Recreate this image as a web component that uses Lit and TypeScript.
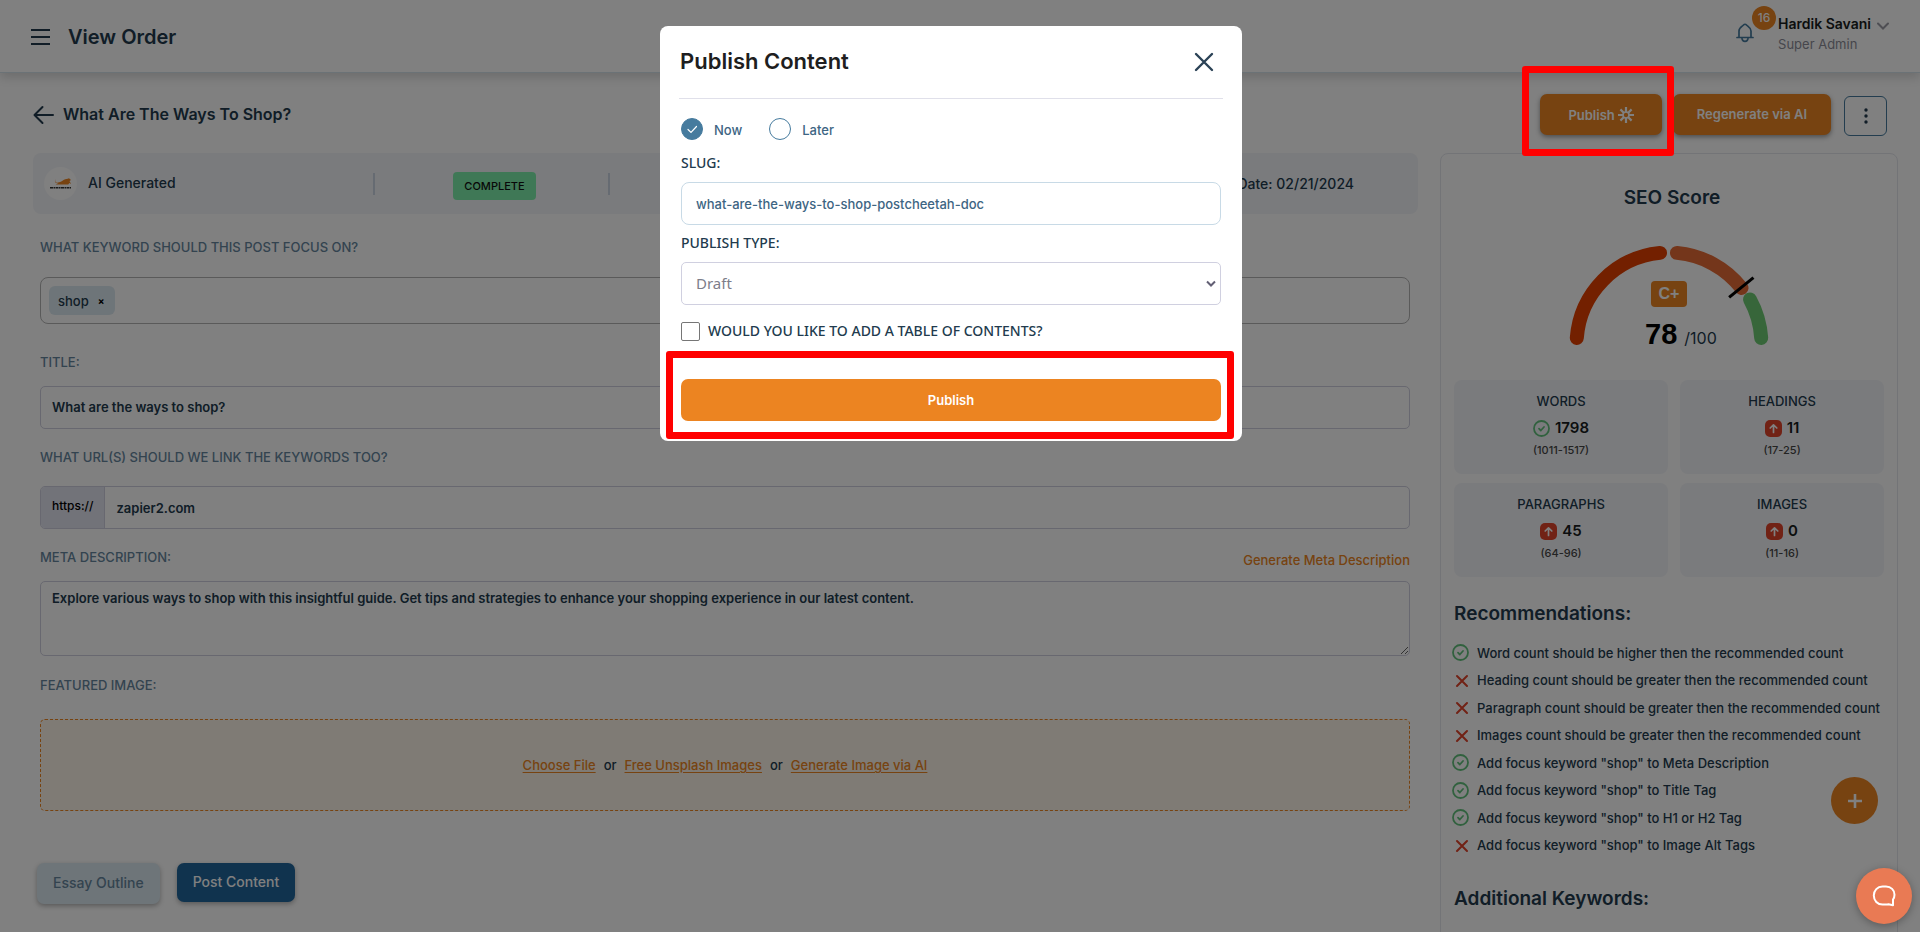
import { LitElement, html, css, nothing } from "lit";
import { customElement, state } from "lit/decorators.js";

const burgerIcon = html`<svg width="20" height="18" viewBox="0 0 20 18" fill="none" stroke="#223b4e" stroke-width="2" aria-hidden="true"><path d="M0 2h19M0 9h19M0 16h19" /></svg>`;
const backIcon = html`<svg width="21" height="20" viewBox="0 0 21 20" fill="none" stroke="#223b4e" stroke-width="2" stroke-linecap="round" stroke-linejoin="round" aria-hidden="true"><path d="M20 10H2M9.500 2L1.500 10l8 8" /></svg>`;
const bellIcon = html`<svg width="18" height="20" viewBox="0 0 18 20" fill="none" stroke="#467b9e" stroke-width="1.700" stroke-linejoin="round" stroke-linecap="round" aria-hidden="true"><path d="M1 14.500h16M3 14.300V8c0-3.500 3.200-4.600 4.500-6 .9-1 2.100-1 3 0C11.800 3.400 15 4.500 15 8v6.300" /><path d="M6 15.500c.4 3.900 5.600 3.900 6 0" /></svg>`;
const chevronIcon = html`<svg width="12" height="8" viewBox="0 0 12 8" fill="none" stroke="#9c9ca6" stroke-width="2" stroke-linecap="round" aria-hidden="true"><path d="M1 1.500l5 5 5-5" /></svg>`;
const burstIcon = html`<svg width="16" height="16" viewBox="0 0 16 16" fill="none" stroke="#fff" stroke-width="2.200" aria-hidden="true"><circle cx="8" cy="8" r="3" stroke-width="1.600" /><path d="M8 0v5.500M8 10.500V16M0 8h5.500M10.500 8H16M2.400 2.400l3.800 3.800M9.800 9.800l3.800 3.800M13.600 2.400L9.800 6.200M6.200 9.800l-3.800 3.800" /></svg>`;
const dotsIcon = html`<svg width="4" height="16" viewBox="0 0 4 16" fill="#223b4e" aria-hidden="true"><circle cx="2" cy="2" r="1.700" /><circle cx="2" cy="8" r="1.700" /><circle cx="2" cy="14" r="1.700" /></svg>`;
const okIcon = html`<svg width="17" height="17" viewBox="0 0 17 17" fill="none" stroke="#62c27d" stroke-width="1.800" stroke-linecap="round" stroke-linejoin="round" aria-hidden="true"><circle cx="8.500" cy="8.500" r="7.500" /><path d="M6 8.700l1.800 1.800 3.200-3.500" /></svg>`;
const crossIcon = html`<svg width="17" height="17" viewBox="0 0 17 17" fill="none" stroke="#e2442b" stroke-width="2" stroke-linecap="round" aria-hidden="true"><path d="M5 4l10 10M15 4L5 14" /></svg>`;
const upIcon = html`<svg width="17" height="17" viewBox="0 0 17 17" fill="none" stroke="#fff" stroke-width="1.700" stroke-linecap="round" stroke-linejoin="round" aria-hidden="true"><rect width="17" height="17" rx="5" fill="#e2442b" stroke="none" /><path d="M8.500 12.500v-7.500M5.200 8l3.300-3.200L11.800 8" /></svg>`;
const closeIcon = html`<svg width="20" height="20" viewBox="0 0 20 20" fill="none" stroke="#2b4256" stroke-width="2.400" stroke-linecap="round" aria-hidden="true"><path d="M2 2l16 16M18 2L2 18" /></svg>`;
const chatIcon = html`<svg width="24" height="22" viewBox="0 0 24 22" fill="none" stroke="#fff" stroke-width="2" stroke-linejoin="round" aria-hidden="true"><path d="M10.500 1.500h3.500c5 0 8.500 3.600 8.500 8.200 0 1.900-.6 3.500-1.500 4.800v5.700l-4.500-1c-.8.300-1.600.4-2.500.4h-3.500c-5 0-8.700-4-8.700-9s3.700-9.100 8.700-9.100z" /></svg>`;
const plusIcon = html`<svg width="14" height="14" viewBox="0 0 14 14" fill="none" stroke="#fff" stroke-width="2.600" aria-hidden="true"><path d="M7 0v14M0 7h14" /></svg>`;
const cheetahLogo = html`<svg width="22" height="12" viewBox="0 0 22 12" aria-hidden="true"><path d="M5.500 1.200c-.8 1.800-.2 3.200 1.500 3.600 3-.4 5-1.400 7-3 1.600-.8 3.300-.9 5-1.500l2 1.800-1.500.8 1.600 3-1.800-1-1 1.700H5.500l3-1.300c-2.800.3-4.500-1.600-3-4.100z" fill="#ed8522" /><path d="M0 9.700h21" stroke="#333" stroke-width="1.400" stroke-dasharray="3 .5 1.500 .5" /></svg>`;

const FONT = css`Inter, "Liberation Sans", sans-serif`;

@customElement("app-header")
class AppHeader extends LitElement {
  static styles = css`
    :host { display: block; font-family: ${FONT}; }
    .bar { display: flex; align-items: center; box-sizing: border-box; height: 73px; padding: 2px 31px 0; background: #fff; border-bottom: 1px solid #d6e3ec; box-shadow: 0 4px 10px rgba(0, 0, 0, 0.16); }
    button { border: 0; background: none; padding: 0; font: inherit; cursor: pointer; display: flex; }
    h1 { margin: 0 auto 0 17px; font-size: 20px; line-height: 24px; font-weight: 600; color: #223b4e; }
    .bell { position: relative; margin: 0 24px 8px 0; }
    .count { position: absolute; left: 16px; top: -17px; width: 24px; height: 24px; border-radius: 50%; background: #ed8522; color: #fff; font-size: 12px; line-height: 24px; font-weight: 500; text-align: center; }
    .user { align-items: flex-start; gap: 6px; text-align: left; margin-bottom: 6px; }
    .name { display: block; font-size: 14px; line-height: 20px; font-weight: 600; color: #181c20; }
    .role { display: block; font-size: 13px; line-height: 20px; color: #8c8c98; }
    .user svg { margin-top: 8px; }
  `;
  render() {
    return html`<header class="bar">
      <button aria-label="Menu">${burgerIcon}</button>
      <h1>View Order</h1>
      <button class="bell" aria-label="Notifications">${bellIcon}<span class="count">16</span></button>
      <button class="user"><span><span class="name">Hardik Savani</span><span class="role">Super Admin</span></span>${chevronIcon}</button>
    </header>`;
  }
}

@customElement("seo-panel")
class SeoPanel extends LitElement {
  static styles = css`
    :host { display: block; box-sizing: border-box; border: 1px solid #e6e8ee; border-radius: 8px; padding: 32px 13px 60px; color: #223b4e; font-family: ${FONT}; }
    h2 { margin: 0; font-size: 19px; line-height: 24px; font-weight: 600; }
    .score { padding-left: 6px; text-align: center; }
    .gauge { position: relative; width: 212px; height: 115px; margin: 28px auto 27px; }
    .grade { position: absolute; left: 88px; top: 43px; width: 36px; height: 26px; border-radius: 4px; background: #ed8522; color: #fff; font: 700 16px/26px "Liberation Sans", sans-serif; text-align: center; }
    .total { position: absolute; left: 82px; top: 78px; display: flex; gap: 7px; align-items: baseline; line-height: 36px; font-size: 16px; white-space: nowrap; }
    .total b { font: 700 29px/36px "Liberation Sans", sans-serif; color: #000; }
    .stats { display: grid; grid-template-columns: 1.05fr 1fr; gap: 9px 12px; }
    .stat { box-sizing: border-box; height: 94px; padding-top: 11px; background: #f4f6fa; border-radius: 8px; text-align: center; }
    .stat-name { font-size: 13px; line-height: 20px; font-weight: 500; }
    .stat-value { display: flex; justify-content: center; align-items: center; gap: 5px; margin-top: 5px; font-size: 15px; line-height: 24px; font-weight: 600; color: #181c20; }
    .stat-range { margin-top: 2px; font-size: 11px; line-height: 16px; font-weight: 500; color: #474747; }
    .recs-title { margin-top: 25px; }
    .recs { list-style: none; margin: 13px 0 28px; padding: 0; height: 220px; display: grid; grid-auto-rows: 1fr; }
    .recs li { display: flex; align-items: center; gap: 8px; font-size: 13px; font-weight: 500; white-space: nowrap; }
    .recs svg { margin-left: -2px; }
  `;
  stats = [
    { name: "WORDS", value: "1798", range: "(1011-1517)", ok: true },
    { name: "HEADINGS", value: "11", range: "(17-25)", ok: false },
    { name: "PARAGRAPHS", value: "45", range: "(64-96)", ok: false },
    { name: "IMAGES", value: "0", range: "(11-16)", ok: false },
  ];
  recommendations: [boolean, string][] = [
    [true, "Word count should be higher then the recommended count"],
    [false, "Heading count should be greater then the recommended count"],
    [false, "Paragraph count should be greater then the recommended count"],
    [false, "Images count should be greater then the recommended count"],
    [true, 'Add focus keyword "shop" to Meta Description'],
    [true, 'Add focus keyword "shop" to Title Tag'],
    [true, 'Add focus keyword "shop" to H1 or H2 Tag'],
    [false, 'Add focus keyword "shop" to Image Alt Tags'],
  ];
  render() {
    return html`
      <h2 class="score">SEO Score</h2>
      <div class="gauge">
        <svg width="212" height="115" viewBox="0 0 212 115" fill="none" stroke-width="14" stroke-linecap="round" aria-hidden="true">
          <path d="M13.800 100A92.500 92.500 0 0 1 97 14.900" stroke="#e54000" />
          <path d="M114 14.900A92.500 92.500 0 0 1 178.500 50" stroke="#e86c36" />
          <path d="M187 61.500A92.500 92.500 0 0 1 198.200 100" stroke="#6ecc74" />
          <path d="M167.300 58.500L189.300 40.500" stroke="#000" stroke-width="3" stroke-linecap="square" />
        </svg>
        <span class="grade">C+</span>
        <span class="total"><b>78</b><span>/100</span></span>
      </div>
      <div class="stats">
        ${this.stats.map((s) => html`<div class="stat">
          <div class="stat-name">${s.name}</div>
          <div class="stat-value">${s.ok ? okIcon : upIcon}<span>${s.value}</span></div>
          <div class="stat-range">${s.range}</div>
        </div>`)}
      </div>
      <h2 class="recs-title">Recommendations:</h2>
      <ul class="recs">
        ${this.recommendations.map(([ok, text]) => html`<li>${ok ? okIcon : crossIcon}<span>${text}</span></li>`)}
      </ul>
      <h2>Additional Keywords:</h2>
    `;
  }
}

@customElement("publish-dialog")
class PublishDialog extends LitElement {
  @state() when = "now";
  static styles = css`
    :host { display: block; width: 582px; max-width: 100%; font-family: ${FONT}; }
    .dialog { box-sizing: border-box; background: #fff; border-radius: 8px; padding: 0 19px 20px; }
    .head { display: flex; align-items: center; justify-content: space-between; height: 72px; padding: 0 9px 0 1px; border-bottom: 1px solid #e0e0ea; }
    h2 { margin: 0 0 2px; font-size: 22px; line-height: 26px; font-weight: 600; color: #1e1e20; }
    .close { border: 0; background: none; padding: 0; display: flex; cursor: pointer; }
    .body { padding: 19px 2px 0; }
    .when { display: flex; gap: 27px; }
    .when label { display: flex; align-items: center; gap: 11px; font-size: 13px; line-height: 22px; font-weight: 500; color: #3d6583; }
    .when span { padding-top: 2px; line-height: 20px; }
    .when input { appearance: none; width: 22px; height: 22px; margin: 0; border: 1px solid #467b9e; border-radius: 50%; background: #fff; }
    .when input:checked { background: #467b9e url("data:image/svg+xml,%3Csvg xmlns='http://www.w3.org/2000/svg' viewBox='0 0 20 20' fill='none' stroke='white' stroke-width='1.200' stroke-linecap='round'%3E%3Cpath d='M6 10.500l3 3 5.500-6'/%3E%3C/svg%3E"); }
    .caption { display: block; font-family: "Noto Sans", sans-serif; font-size: 14px; line-height: 20px; font-weight: 500; color: #223b4e; }
    .slug-caption { margin: 13px 0 9px; }
    .type-caption { margin: 8px 0 9px; }
    .control { display: block; box-sizing: border-box; width: 100%; height: 43px; margin: 0; padding: 0 14px; background: #fff; outline: 0; }
    .slug { border: 1px solid #c8dae6; border-radius: 8px; font: 500 13px ${FONT}; color: #3d6583; }
    .type { appearance: none; padding-bottom: 2px; border: 1px solid #d0d0e0; border-radius: 5px; font: 400 15px "Noto Sans", sans-serif; color: #7d7d8a; background: #fff url("data:image/svg+xml,%3Csvg xmlns='http://www.w3.org/2000/svg' width='10' height='8' fill='none' stroke='%23625f74' stroke-width='2'%3E%3Cpath d='M1 1.500l4 4 4-4'/%3E%3C/svg%3E") no-repeat right 4px center; }
    .toc { display: flex; align-items: center; gap: 8px; margin: 16px 0 38px; }
    .toc input { appearance: none; width: 19px; height: 19px; margin: 0; border: 1px solid #767676; border-radius: 2px; }
    .marked { position: relative; }
    .marked::after { content: ""; position: absolute; inset: -28px -13px -18px -15px; border: 7px solid #f00; border-radius: 3px; pointer-events: none; }
    .publish { display: block; width: 100%; height: 42px; border: 0; border-radius: 7px; background: #ec8421; color: #fff; font: 600 13px ${FONT}; cursor: pointer; }
  `;
  render() {
    return html`<section class="dialog" role="dialog" aria-modal="true" aria-labelledby="heading">
      <div class="head"><h2 id="heading">Publish Content</h2><button class="close" aria-label="Close">${closeIcon}</button></div>
      <form class="body" @submit=${(e: Event) => e.preventDefault()}>
        <div class="when">
          <label><input type="radio" name="when" .checked=${this.when === "now"} @change=${() => (this.when = "now")} /><span>Now</span></label>
          <label><input type="radio" name="when" .checked=${this.when === "later"} @change=${() => (this.when = "later")} /><span>Later</span></label>
        </div>
        <label class="caption slug-caption" for="slug">SLUG:</label>
        <input class="control slug" id="slug" type="text" value="what-are-the-ways-to-shop-postcheetah-doc" />
        <label class="caption type-caption" for="type">PUBLISH TYPE:</label>
        <select class="control type" id="type"><option>Draft</option><option>Publish</option></select>
        <div class="toc"><input type="checkbox" id="toc" /><label class="caption" for="toc">WOULD YOU LIKE TO ADD A TABLE OF CONTENTS?</label></div>
        <div class="marked"><button class="publish">Publish</button></div>
      </form>
    </section>`;
  }
}

@customElement("app-root")
class AppRoot extends LitElement {
  @state() dialogOpen = true;
  static styles = css`
    :host { display: block; height: 100vh; overflow: hidden; background: #fff; font-family: ${FONT}; color: #223b4e; }
    button { font-family: inherit; cursor: pointer; }
    .head { display: flex; align-items: center; box-sizing: border-box; height: 80px; padding: 3px 33px 0 33px; }
    .back { border: 0; background: none; padding: 0; display: flex; margin: 0 9px 0 0; }
    h2 { margin: 0 auto 2px 0; font-size: 16px; line-height: 24px; font-weight: 600; }
    .solid { display: block; height: 41px; border: 0; border-radius: 7px; background: #ed8522; color: #fff; font-size: 13px; font-weight: 600; box-shadow: 0 2px 5px rgba(0, 0, 0, 0.4); }
    .marked { position: relative; margin-right: 11px; }
    .marked::after { content: ""; position: absolute; z-index: 30; inset: -28px -12px -21px -18px; border: 7px solid #f00; border-radius: 3px; pointer-events: none; }
    .publish { display: flex; align-items: center; gap: 3px; padding: 0 28px; }
    .regen { padding: 0 24px 2px; margin-right: 13px; }
    .more { display: flex; align-items: center; justify-content: center; width: 43px; height: 40px; background: #fff; border: 1px solid #467b9e; border-radius: 6px; margin-top: 2px; }
    .columns { display: grid; grid-template-columns: minmax(0, 1fr) 458px; gap: 22px; padding: 0 22px 0 33px; }
    .summary { display: grid; grid-template-columns: 340px 237px 1fr; align-items: center; height: 61px; background: #f4f6fa; border-radius: 8px; font-size: 14px; font-weight: 500; }
    .source { display: flex; align-items: center; gap: 11px; padding-left: 11px; }
    .source span:last-child { padding-bottom: 3px; }
    .avatar { display: flex; align-items: center; justify-content: center; width: 33px; height: 33px; border-radius: 50%; background: #fff; }
    .status-cell { display: flex; justify-content: center; border: solid #ccd6e4; border-width: 0 2px; height: 22px; align-items: center; }
    .status { margin: 4px 0 0 6px; padding: 0 11px; line-height: 28px; border-radius: 4px; background: #7ff0ab; color: #111; font-size: 11px; font-weight: 500; }
    .date { justify-self: end; padding-right: 64px; }
    .form { padding: 0 8px 0 7px; }
    .caption { display: block; font-size: 13px; line-height: 20px; font-weight: 500; color: #66869e; }
    .kw { margin: 23px 0 20px; }
    .ti { margin: 28px 0 14px; }
    .ur { margin: 18px 0 19px; }
    .fe { margin: 19px 0 24px; }
    .meta-row { display: flex; justify-content: space-between; margin: 18px 0 14px; }
    .link { font-size: 13px; line-height: 26px; font-weight: 500; color: #ed8522; text-decoration: none; margin-bottom: -6px; }
    .tags { display: flex; align-items: center; box-sizing: border-box; height: 47px; padding: 0 8px; border: 1px solid #b4b4b4; border-radius: 8px; }
    .tag { display: flex; align-items: center; gap: 9px; height: 29px; padding: 0 10px 0 9px; border-radius: 6px; background: #dce9f1; font-size: 13px; font-weight: 500; }
    .tag button { border: 0; background: none; padding: 0; font-size: 10px; font-weight: 700; color: #000; }
    .box { box-sizing: border-box; width: 100%; border: 1px solid #d0d0e0; border-radius: 5px; background: #fff; color: #223b4e; font: 600 13px/20px ${FONT}; outline: 0; display: block; margin: 0; }
    .line { height: 43px; padding: 0 11px 2px; }
    .group { display: flex; overflow: hidden; height: 43px; }
    .prefix { flex: none; padding: 0 11px; line-height: 38px; background: #e4e6f2; border-right: 1px solid #d0d0e0; font-size: 12px; font-weight: 500; color: #000; }
    .group input { flex: 1; border: 0; padding: 0 11px; outline: 0; background: none; font: inherit; color: inherit; }
    textarea.box { height: 75px; padding: 6px 11px; resize: both; }
    .drop { display: flex; align-items: center; justify-content: center; gap: 8px; box-sizing: border-box; height: 92px; border: 1px dashed #ed8522; border-radius: 5px; background: #fef5ea; font-size: 13px; font-weight: 500; }
    .drop a { color: #ed8522; text-decoration: underline; text-underline-offset: 2px; }
    .actions { display: flex; gap: 17px; margin-top: 52px; padding-left: 4px; align-items: flex-start; }
    .tab { height: 39px; padding: 0 16px 2px; border: 0; border-radius: 7px; background: #20669c; color: #fff; font-size: 14px; font-weight: 500; box-shadow: 0 2px 5px rgba(0, 0, 0, 0.3); }
    .tab.muted { height: 41px; background: #dce9f1; color: #66869e; }
    .fab { position: fixed; right: 42px; bottom: 108px; width: 47px; height: 47px; padding: 0; border: 0; border-radius: 50%; background: #ed8522; display: flex; align-items: center; justify-content: center; }
    .backdrop { position: fixed; inset: 0; z-index: 10; background: rgba(0, 0, 0, 0.498); display: flex; justify-content: center; align-items: flex-start; padding: 26px 18px 0 0; }
    .chat { position: fixed; z-index: 40; right: 8px; bottom: 8px; width: 56px; height: 56px; border: 0; border-radius: 50%; background: #e97a54; box-shadow: 0 2px 8px rgba(0, 0, 0, 0.3); display: flex; align-items: center; justify-content: center; }
  `;
  render() {
    return html`
      <app-header></app-header>
      <div class="head">
        <button class="back" aria-label="Back">${backIcon}</button>
        <h2>What Are The Ways To Shop?</h2>
        <div class="marked"><button class="solid publish">Publish ${burstIcon}</button></div>
        <button class="solid regen">Regenerate via AI</button>
        <button class="more" aria-label="More">${dotsIcon}</button>
      </div>
      <div class="columns">
        <main>
          <div class="summary">
            <div class="source"><span class="avatar">${cheetahLogo}</span><span>AI Generated</span></div>
            <div class="status-cell"><span class="status">COMPLETE</span></div>
            <div class="date">Date: 02/21/2024</div>
          </div>
          <div class="form">
            <span class="caption kw">WHAT KEYWORD SHOULD THIS POST FOCUS ON?</span>
            <div class="tags"><span class="tag">shop<button aria-label="Remove shop">×</button></span></div>
            <label class="caption ti" for="title">TITLE:</label>
            <input class="box line" id="title" type="text" value="What are the ways to shop?" />
            <label class="caption ur" for="url">WHAT URL(S) SHOULD WE LINK THE KEYWORDS TOO?</label>
            <div class="box group"><span class="prefix">https://</span><input id="url" type="text" value="zapier2.com" /></div>
            <div class="meta-row"><label class="caption" for="meta">META DESCRIPTION:</label><a class="link" href="#">Generate Meta Description</a></div>
            <textarea class="box" id="meta" .value=${"Explore various ways to shop with this insightful guide. Get tips and strategies to enhance your shopping experience in our latest content."}></textarea>
            <span class="caption fe">FEATURED IMAGE:</span>
            <div class="drop"><a href="#">Choose File</a><span>or</span><a href="#">Free Unsplash Images</a><span>or</span><a href="#">Generate Image via AI</a></div>
          </div>
          <div class="actions">
            <button class="tab muted">Essay Outline</button>
            <button class="tab">Post Content</button>
          </div>
        </main>
        <seo-panel></seo-panel>
      </div>
      <button class="fab" aria-label="Add">${plusIcon}</button>
      ${this.dialogOpen ? html`<div class="backdrop"><publish-dialog></publish-dialog></div>` : nothing}
      <button class="chat" aria-label="Open chat">${chatIcon}</button>
    `;
  }
}
